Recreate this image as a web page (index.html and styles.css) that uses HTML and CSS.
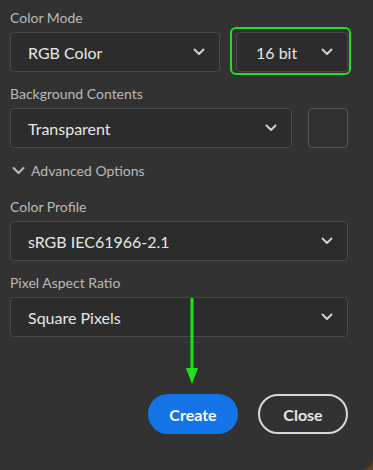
FILE: index.html
```html
<!DOCTYPE html>
<html lang="en">
    <head>
        <meta charset="UTF-8" />
        <meta name="viewport" content="width=device-width, initial-scale=1.0" />
        <title>New Document</title>
        <link rel="stylesheet" href="styles.css">
    </head>
    <body>
        <div class="panel">
            <!-- Color Mode -->
            <div class="field">
                <label class="label">Color Mode</label>
                <div class="row">
                    <div class="select wide">
                        <span>RGB Color</span>
                        <svg class="chev" width="12" height="8" viewBox="0 0 12 8"><path d="M1.5 1.5 L6 6 L10.5 1.5" /></svg>
                    </div>
                    <div class="select bits highlight">
                        <span>16 bit</span>
                        <svg class="chev" width="12" height="8" viewBox="0 0 12 8"><path d="M1.5 1.5 L6 6 L10.5 1.5" /></svg>
                    </div>
                </div>
            </div>

            <!-- Background Contents -->
            <div class="field">
                <label class="label">Background Contents</label>
                <div class="row">
                    <div class="select wide">
                        <span>Transparent</span>
                        <svg class="chev" width="12" height="8" viewBox="0 0 12 8"><path d="M1.5 1.5 L6 6 L10.5 1.5" /></svg>
                    </div>
                    <div class="swatch"></div>
                </div>
            </div>

            <!-- Advanced Options -->
            <div class="advanced">
                <svg class="adv-chev" width="13" height="9" viewBox="0 0 13 9"><path d="M1.5 2 L6.5 7 L11.5 2" /></svg>
                <span>Advanced Options</span>
            </div>

            <div class="field">
                <label class="label">Color Profile</label>
                <div class="select">
                    <span>sRGB IEC61966-2.1</span>
                    <svg class="chev" width="12" height="8" viewBox="0 0 12 8"><path d="M1.5 1.5 L6 6 L10.5 1.5" /></svg>
                </div>
            </div>

            <div class="field">
                <label class="label">Pixel Aspect Ratio</label>
                <div class="select">
                    <span>Square Pixels</span>
                    <svg class="chev" width="12" height="8" viewBox="0 0 12 8"><path d="M1.5 1.5 L6 6 L10.5 1.5" /></svg>
                </div>
            </div>

            <!-- Buttons -->
            <div class="actions">
                <button class="btn primary">Create</button>
                <button class="btn secondary">Close</button>
            </div>

            <!-- annotation arrow -->
            <svg class="arrow" width="16" height="90" viewBox="0 0 16 90">
                <rect x="6.5" y="0" width="3" height="74" fill="#1ee01e" />
                <polygon points="2,70 14,70 8,86" fill="#1ee01e" />
            </svg>
        </div>
    </body>
</html>
```

FILE: styles.css
```css
* {
    box-sizing: border-box;
}

html {
    background-color: #5b3f2e;
}

body {
    margin: 0;
    font-family: "Lato", "Open Sans", sans-serif;
}

.panel {
    position: relative;
    width: 373px;
    height: 470px;
    padding: 8px 25px 0 10px;
    background-color: #323232;
    border-bottom-right-radius: 12px;
}

.field {
    margin-bottom: 12px;
}

.label {
    display: block;
    height: 24px;
    line-height: 20px;
    font-size: 14px;
    color: #b9b9b9;
}

.row {
    display: flex;
    gap: 16px;
}

.select {
    display: flex;
    align-items: center;
    justify-content: space-between;
    height: 40px;
    padding: 0 14px 0 17px;
    background-color: #2c2c2c;
    border: 1px solid #474747;
    border-radius: 4px;
    font-size: 16px;
    color: #e6e6e6;
}

.select.wide {
    flex: 1;
}

.select.bits {
    width: 112px;
    padding-left: 19px;
}

.highlight {
    position: relative;
}

.highlight::after {
    content: "";
    position: absolute;
    top: -6px;
    right: -4px;
    bottom: -4px;
    left: -7px;
    border: 2px solid #1ee01e;
    border-radius: 6px;
}

.chev path {
    fill: none;
    stroke: #cfcfcf;
    stroke-width: 2;
    stroke-linecap: round;
    stroke-linejoin: round;
}

.swatch {
    width: 40px;
    height: 40px;
    border: 1px solid #565656;
    border-radius: 4px;
    background-color: #303030;
}

.advanced {
    display: flex;
    align-items: center;
    gap: 6px;
    height: 20px;
    margin: 2px 0 17px 2px;
    font-size: 14px;
    color: #b9b9b9;
}

.adv-chev path {
    fill: none;
    stroke: #bdbdbd;
    stroke-width: 2;
    stroke-linecap: round;
    stroke-linejoin: round;
}

.actions {
    display: flex;
    justify-content: flex-end;
    gap: 20px;
    margin-top: 57px;
}

.btn {
    width: 90px;
    height: 40px;
    border-radius: 20px;
    font-family: inherit;
    font-size: 16px;
    font-weight: bold;
    cursor: pointer;
}

.primary {
    background-color: #1473e6;
    border: none;
    color: #ffffff;
}

.secondary {
    background-color: transparent;
    border: 2px solid #d8d8d8;
    color: #e6e6e6;
}

.arrow {
    position: absolute;
    left: 184px;
    top: 298px;
}
```
